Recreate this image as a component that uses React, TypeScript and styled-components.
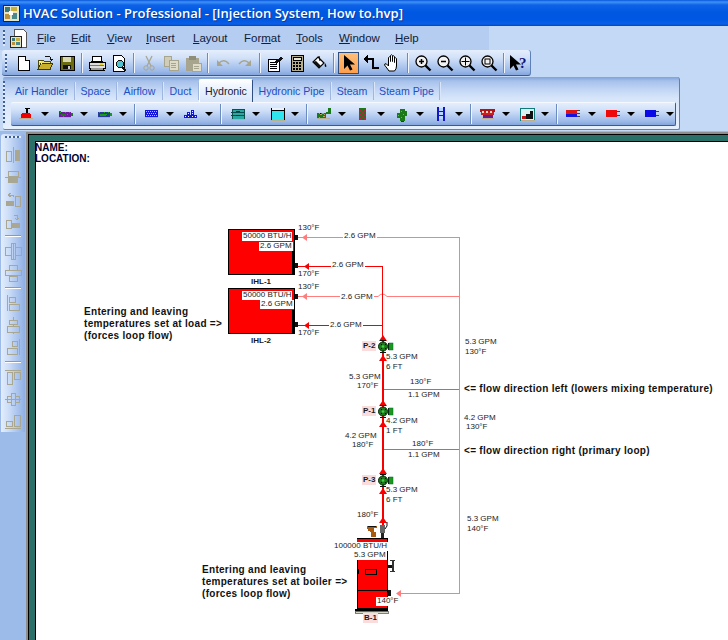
import React from 'react';
import styled, { createGlobalStyle, css } from 'styled-components';

const Global = createGlobalStyle`
  html, body { margin: 0; padding: 0; background: #c4d9f5; overflow: hidden; }
  #root { width: 728px; height: 640px; }
`;

const Window = styled.div`
  width: 728px; height: 640px; display: flex; flex-direction: column; overflow: hidden;
  background: #c4d9f5; font-family: "Liberation Sans", Arial, sans-serif;
`;
const TitleBar = styled.div`
  height: 26px; flex: none; display: flex; align-items: center; gap: 3px; padding-left: 2px; box-sizing: border-box;
  background: linear-gradient(#0a55d8 0, #3d93f8 2px, #0f62e6 5px, #0058e2 12px, #0058e2 20px, #0a5fe8 24px, #0446b8 26px);
`;
const TitleText = styled.span`
  color: #fff; font: 600 13px "Open Sans", sans-serif; text-shadow: 1px 1px 0 #0a3a9a; white-space: nowrap;
`;
const MenuRow = styled.div`height: 24px; flex: none; display: flex;`;
const MenuBand = styled.div`
  width: 489px; display: flex; align-items: center; background: #b5cdf1; box-sizing: border-box; padding-left: 3px;
`;
const Grip = styled.div<{ $h?: number }>`
  width: 2px; height: ${p => p.$h ?? 16}px; flex: none;
  background: repeating-linear-gradient(#3d5f96 0 2px, #dfeafb 2px 4px);
`;
const MenuLogo = styled.svg`margin-left: 4px; flex: none;`;
const MenuItems = styled.div`display: flex; margin-left: 8px; align-items: center;`;
const MenuItem = styled.span<{ $w: number }>`
  width: ${p => p.$w}px; font-size: 11.5px; color: #10203a; white-space: nowrap;
`;
const ToolbarRow = styled.div`height: 27px; flex: none; padding-left: 2px; box-sizing: border-box;`;
const barFill = css`background: linear-gradient(#e4eefd 0, #d3e2f8 30%, #b9cff2 55%, #9ab8e8 85%, #84a5dc 100%);`;
const Toolbar = styled.div`
  width: 529px; height: 26px; display: flex; align-items: center; box-sizing: border-box;
  ${barFill}
  border-bottom: 1px solid #3a5b8f; border-right: 1px solid #5d80b8; border-radius: 3px 3px 3px 3px; padding-left: 3px;
`;
const Btn = styled.div<{ $on?: boolean }>`
  width: 22px; height: 22px; flex: none; display: flex; align-items: center; justify-content: center; box-sizing: border-box;
  ${p => p.$on && css`background: linear-gradient(#fdc07a, #fe9f4c); border: 1px solid #2f4f80; width: 21px; margin-right: 1px;`}
`;
const GripBox = styled.div`width: 7px; flex: none; display: flex; justify-content: flex-start;`;
const Sep = styled.div`
  width: 8px; height: 20px; flex: none; position: relative;
  &::after { content: ""; display: block; margin-left: 3px; width: 1px; height: 20px; background: #6c8cc0; box-shadow: 1px 0 0 #f2f7ff; }
`;
const TabRow = styled.div`height: 54px; flex: none; padding-left: 3px; box-sizing: border-box;`;
const TabPanel = styled.div`
  width: 677px; height: 53px; box-sizing: border-box; display: flex; flex-direction: column; position: relative;
  background: linear-gradient(#7fa2d9 0, #a6c1ea 4px, #c0d5f4 12px, #d8e6fa 22px, #e6f0fd 100%);
  border-right: 1px solid #5d80b8; border-bottom: 1px solid #5d80b8; border-radius: 2px 3px 2px 2px;
`;
const TabGrip = styled.div`position: absolute; left: 0; top: 4px;`;
const Tabs = styled.div`display: flex; height: 24px; padding: 2px 0 0 6px; box-sizing: border-box; align-items: stretch;`;
const Tab = styled.div<{ $on?: boolean; $w: number }>`
  width: ${p => p.$w}px; font-size: 10.6px; white-space: nowrap; display: flex; align-items: center; justify-content: center; box-sizing: border-box; flex: none;
  ${p => p.$on ? css`
    color: #10203a; background: linear-gradient(#fff, #f3f7fe 20%, #d8e6fa); border: 1px solid #fff; border-right: 1px solid #2f4f80; border-bottom: 0; height: 23px; border-radius: 2px 2px 0 0;
  ` : css`
    color: #1c4fc4; margin-top: 3px; height: 18px; border-right: 1px solid #9db7e0; box-shadow: 1px 0 0 #d9e6fa;
  `}
`;
const Strip = styled.div`
  margin: 1px 0 0 8px; width: 665px; height: 24px; flex: none; display: flex; align-items: center; box-sizing: border-box; overflow: hidden;
  border-top: 1px solid #f5f9ff; ${barFill} border-right: 1px solid #3a5b8f; border-bottom: 1px solid #3a5b8f; border-radius: 2px; padding-left: 5px;
`;
const Drop = styled.div`width: 39px; height: 22px; flex: none; display: flex; align-items: center;`;
const DropIcon = styled.div`width: 22px; display: flex; justify-content: center; flex: none;`;
const Caret = styled.div`
  width: 0; height: 0; border: 4px solid transparent; border-top: 4px solid #000; border-bottom: 0; flex: none; margin-left: 3px;
`;
const StripSep = styled.div`
  width: 8px; height: 20px; flex: none;
  &::after { content: ""; display: block; margin-left: 1px; width: 1px; height: 20px; background: #6c8cc0; box-shadow: 1px 0 0 #f2f7ff; }
`;
const Workspace = styled.div`flex: 1; min-height: 0; display: flex; background: #9cbbe8;`;
const Dock = styled.div`width: 26px; flex: none; padding: 3px 0 0 1px; box-sizing: border-box; background: #9cbbe8;`;
const VToolbar = styled.div`
  width: 24px; height: 298px; box-sizing: border-box; display: flex; flex-direction: column; align-items: center; padding-left: 0;
  background: linear-gradient(90deg, #e3eefd 0, #c9dbf6 35%, #b2caf0 60%, #8eaee3 100%); border-radius: 3px 3px 0 0;
`;
const VGrip = styled.div`
  height: 8px; width: 16px; flex: none; margin-top: 2px; box-sizing: border-box;
  background: repeating-linear-gradient(90deg, #3d5f96 0 2px, #e6effc 2px 4px) 0 0 / 100% 2px no-repeat;
`;
const VBtn = styled.div`width: 22px; height: 22px; flex: none; display: flex; align-items: center; justify-content: center;`;
const VSep = styled.div`
  height: 8px; width: 100%; flex: none; display: flex; align-items: center; justify-content: center;
  &::after { content: ""; width: 16px; height: 1px; background: #fff; box-shadow: 0 -1px 0 #7c9bd0; }
`;
const Frame = styled.div`
  flex: 1; min-width: 0; margin-top: 1px; border-top: 2px solid #8e8e8e; border-left: 2px solid #8e8e8e; background: #000;
  display: flex; box-sizing: border-box;
`;
const FrameInner = styled.div`
  flex: 1; min-width: 0; margin: 1px 0 0 1px; background: #2b7068; padding: 6px 0 0 6px; box-sizing: border-box; display: flex;
`;
const Canvas = styled.div`
  flex: 1; min-width: 0; background: #fff; border-top: 1px solid #000; border-left: 1px solid #000; position: relative; overflow: hidden;
`;
const Sheet = styled.svg`position: absolute; left: 0; top: 0; display: block;`;
const OX = 36, OY = 141;
type LP = { $x: number; $y: number; $kind?: 'n' | 'b' | 'note' | 'head' | 'tag'; $bg?: boolean };
const Lbl = styled.span.attrs<LP>(p => ({ style: { left: p.$x - OX, top: p.$y - OY - 5 } }))<LP>`
  position: absolute; line-height: 10px; height: 10px; white-space: nowrap; color: #222;
  font-size: 8px;
  ${p => p.$bg && css`background: #fff; padding: 0 1px; margin-left: -1px; margin-top: 1px; height: 9px; line-height: 8px;`}
  ${p => p.$kind === 'b' && css`font-weight: 700; color: #1a1a1a;`}
  ${p => p.$kind === 'tag' && css`font-weight: 700; color: #1a1a1a; background: #fbdcdc; padding: 0 1px; margin-left: -1px;`}
  ${p => p.$kind === 'note' && css`font-size: 10px; font-weight: 700; color: #111; line-height: 12px; height: 12px; margin-top: -1px; letter-spacing: 0.3px;`}
  ${p => p.$kind === 'head' && css`font-size: 10px; font-weight: 700; color: #000030; background: #fff; padding-right: 2px;`}
`;

type S = React.SVGProps<SVGSVGElement>;
const Ico: React.FC<S & { w?: number; h?: number; crisp?: boolean }> = ({ w = 18, h = 18, crisp = true, children, ...r }) => (
  <svg width={w} height={h} viewBox={`0 0 ${w} ${h}`} shapeRendering={crisp ? 'crispEdges' : 'auto'} {...r}>{children}</svg>
);

function Zoomer({ k }: { k: string }) {
  return (
    <Ico crisp={false}>
      <circle cx="7.500" cy="7.500" r="5.500" fill="#f2f2f2" stroke="#000" strokeWidth="1.300" />
      <path d="M11.500 11.500l5 5" stroke="#000" strokeWidth="2.400" />
      {k !== 'o' && k !== 'x' && <path d="M5 7.500h5" stroke="#000" strokeWidth="1.500" />}
      {k === '+' && <path d="M7.500 5v5" stroke="#000" strokeWidth="1.500" />}
      {k === 'x' && <path d="M7.500 3.500v8M3.500 7.500h8" stroke="#000" />}
      {k === 'o' && <rect x="5" y="5" width="5" height="5" fill="none" stroke="#000" />}
    </Ico>
  );
}

const I = {
  new: <Ico><path d="M4 2h7l4 4v10H4z" fill="#fff" stroke="#000" /><path d="M11 2v4h4" fill="#ddd" stroke="#000" /></Ico>,
  open: <Ico><path d="M2 6h5l1 1h6v8H2z" fill="#efe26a" stroke="#4a4a10" /><path d="M2 15l3-6h12l-3 6z" fill="#c9b02c" stroke="#3a3a08" /><path d="M3 7h2v1H3zM5 9h1v1H5z" fill="#fff" /><path d="M9 3q3-2 5 0l1 2" fill="none" stroke="#111" /><path d="M13 5h4l-2 2z" fill="#111" /></Ico>,
  save: <Ico><rect x="2" y="2" width="14" height="14" fill="#6b6b12" stroke="#000" /><rect x="5" y="3" width="8" height="5" fill="#d9d9b0" /><rect x="5" y="11" width="8" height="4" fill="#111" /><rect x="10" y="12" width="2" height="3" fill="#ccc" /></Ico>,
  print: <Ico><path d="M5 2h8l1 5H4z" fill="#fff" stroke="#000" /><path d="M1 8h16v6H1z" fill="#ddd" stroke="#000" /><path d="M3 14l-1 2h14l-1-2" fill="#999" stroke="#000" /><path d="M12 9h3v2h-3z" fill="#e8d23a" /><path d="M2 11h14" stroke="#777" /></Ico>,
  preview: <Ico><path d="M3 1h8l3 3v13H3z" fill="#fff" stroke="#000" /><circle cx="10" cy="10" r="3.500" fill="#4fc3cf" stroke="#111" /><path d="M12 13l4 4" stroke="#111" strokeWidth="2" /></Ico>,
  cut: <Ico crisp={false}><path d="M6 2l5 10M12 2L7 12" stroke="#a8a58f" strokeWidth="1.300" fill="none" /><circle cx="6" cy="14" r="2.200" fill="none" stroke="#a8a58f" /><circle cx="12" cy="14" r="2.200" fill="none" stroke="#a8a58f" /></Ico>,
  copy: <Ico><path d="M2 2h7v10H2z" fill="#cfccb8" stroke="#a8a58f" /><path d="M7 6h9v10H7z" fill="#dedbc9" stroke="#a8a58f" /><path d="M9 9h5M9 11h5M9 13h5" stroke="#a8a58f" /></Ico>,
  paste: <Ico><path d="M2 4h13v13H2z" fill="#a8a58f" /><path d="M5 2h7v4H5z" fill="#8f8c78" /><path d="M8 9h9v8H8z" fill="#dedbc9" stroke="#a8a58f" /><path d="M10 12h5M10 14h5" stroke="#a8a58f" /></Ico>,
  undo: <Ico crisp={false}><path d="M5 9q5-5 10 1" fill="none" stroke="#a8a58f" strokeWidth="1.600" /><path d="M3 6v6h6z" fill="#a8a58f" /></Ico>,
  redo: <Ico crisp={false}><path d="M13 9q-5-5-10 1" fill="none" stroke="#a8a58f" strokeWidth="1.600" /><path d="M15 6v6H9z" fill="#a8a58f" /></Ico>,
  props: <Ico><path d="M2 5h11v12H2z" fill="#fff" stroke="#000" /><path d="M4 8h7M4 10h7M4 12h7M4 14h7" stroke="#000" /><path d="M8 8l7-5 2 2-7 5z" fill="#111" /></Ico>,
  calc: <Ico><rect x="3" y="1" width="12" height="16" fill="#b5ad8c" stroke="#000" /><rect x="5" y="3" width="8" height="3" fill="#e4e4d0" stroke="#000" /><path d="M5 8h2v2H5zM8 8h2v2H8zM11 8h2v2h-2zM5 11h2v2H5zM8 11h2v2H8zM11 11h2v2h-2zM5 14h2v2H5zM8 14h2v2H8zM11 14h2v2h-2z" fill="#000" /></Ico>,
  fill: <Ico crisp={false}><path d="M8 3l6 6-5 5-6-6z" fill="#fff" stroke="#000" strokeWidth="1.200" /><path d="M3 8l6 6 2-2-5-5z" fill="#111" /><path d="M9 2l1 5" stroke="#000" /><path d="M15 9q2 3 1 4q-2 0-1-4" fill="#000" /></Ico>,
  arrow: <Ico crisp={false} w={14}><path d="M2 1l0 14 3.500-3.500 2.500 5 2.500-1-2.500-5h5z" fill="#000" /></Ico>,
  pipe: <Ico><path d="M6 5h5v9h6" fill="none" stroke="#000" strokeWidth="2.400" /><path d="M6 1v8L1 5z" fill="#000" /></Ico>,
  hand: <Ico crisp={false}><path d="M5 17q-2-3-4.500-6q0-2 2-1l2 2V3.500q1-1.500 2 0v4V1.500q1-1.500 2 0v6V2.500q1-1.500 2 0v6V4.500q1-1.500 2 0v7.500q0 3-2 5z" fill="#fff" stroke="#000" strokeWidth="1" /></Ico>,
  zoomIn: <Zoomer k="+" />,
  zoomOut: <Zoomer k="-" />,
  zoomFit: <Zoomer k="x" />,
  zoomPage: <Zoomer k="o" />,
  help: <Ico crisp={false} w={20}><path d="M1 1l0 14 3.500-3.500 2.500 5 2.500-1-2.500-5h5z" fill="#000" /><text x="10" y="14" fontFamily="Liberation Serif" fontWeight="700" fontSize="15" fill="#12127a">?</text></Ico>,
};

const DI = {
  pump: <Ico><path d="M3 10h10v3H3z" fill="#e00000" /><path d="M3 9q5-3 10 0v4H3z" fill="#f00000" /><path d="M8 4h2v4H8zM7 3h5v1H7z" fill="#000" /><path d="M1 13h14v1H1z" fill="#b8b090" /></Ico>,
  coilA: <Ico><path d="M2 7h12v5H2z" fill="#6a1a9a" /><path d="M3 7h1v1H3zM5 9h1v1H5zM8 7h1v1H8zM10 9h1v1h-1zM12 7h1v1h-1zM6 11h1v1H6z" fill="#1fa51f" /><path d="M2 6h2v1H2zM14 8h2v3h-2zM4 9h5v2H4z" fill="#1a7a1a" /><path d="M2 12h12v1H2z" fill="#b8b090" /></Ico>,
  coilB: <Ico><path d="M2 7h12v5H2z" fill="#2a3a9a" /><path d="M3 7h1v1H3zM5 9h1v1H5zM8 7h1v1H8zM10 9h1v1h-1zM12 7h1v1h-1z" fill="#1fa51f" /><path d="M14 8h2v3h-2zM4 9h6v2H4z" fill="#1a9a1a" /><path d="M2 12h12v1H2z" fill="#b8b090" /></Ico>,
  blueGrid: <Ico><path d="M2 5h13v7H2z" fill="#1414e0" /><path d="M3 6h1v1H3zM5 6h1v1H5zM7 6h1v1H7zM9 6h1v1H9zM11 6h1v1h-1zM13 6h1v1h-1zM4 8h1v1H4zM6 8h1v1H6zM8 8h1v1H8zM10 8h1v1h-1zM12 8h1v1h-1zM3 10h1v1H3zM5 10h1v1H5zM7 10h1v1H7zM9 10h1v1H9zM11 10h1v1h-1zM13 10h1v1h-1z" fill="#7fdcff" /><path d="M2 12h13v1H2z" fill="#b8b090" /></Ico>,
  blueRad: <Ico><path d="M2 10h13v3H2zM5 7h3v3H5zM9 5h3v5H9z" fill="#1414d8" /><path d="M3 11h1v1H3zM6 8h1v1H6zM6 11h1v1H6zM10 6h1v1h-1zM10 8h1v1h-1zM10 11h1v1h-1zM13 11h1v1h-1z" fill="#fff" /></Ico>,
  tank: <Ico><path d="M3 4h12v10H3z" fill="#28a8a0" stroke="#10504a" /><path d="M2 7h14M2 10h14" stroke="#0a4a50" /><path d="M7 6h4v1H7zM7 10h4v1H7z" fill="#10208a" /><path d="M2 14h14v1H2z" fill="#b8b090" /></Ico>,
  basin: <Ico><path d="M3 3v12h13V3" fill="#2fe6ee" stroke="#000" /><path d="M3.500 3h12v2h-12z" fill="#e8f2fd" /><path d="M3 5h13" stroke="#000" /><path d="M3 15h14v1H3z" fill="#b8b090" /></Ico>,
  chiller: <Ico><path d="M2 8h9v5H2z" fill="#1a7a1a" /><path d="M4 8l2 2 2-2 2 2M4 12h1M8 11h2" stroke="#b8a060" /><path d="M11 7h5v2h-5zM13 3h3v4h-3z" fill="#1a7a1a" /><path d="M2 13h13v1H2z" fill="#b8b090" /></Ico>,
  vert: <Ico><path d="M5 3h7v12H5z" fill="#1a7a1a" /><path d="M6 5h1v1H6zM8 7h1v1H8zM10 5h1v1h-1zM6 9h1v1H6zM10 9h1v1h-1zM8 11h1v1H8zM6 13h1v1H6zM10 13h1v1h-1z" fill="#c02040" /></Ico>,
  cactus: <Ico><path d="M7 4h5v12H7zM4 8h3v5H4zM12 6h2v5h-2z" fill="#1a7a1a" /><path d="M8 6h1v1H8zM10 9h1v1h-1zM8 12h1v1H8zM5 10h1v1H5z" fill="#a8a020" /><path d="M8 16h3v1H8z" fill="#333" /></Ico>,
  ladder: <Ico><path d="M5 2h2v14H5zM11 2h2v14h-2z" fill="#1414c8" /><path d="M7 3h4v3H7zM7 7h4v3H7zM7 11h4v3H7z" fill="#b8d8ff" /><path d="M7 6h4M7 10h4" stroke="#1414c8" /></Ico>,
  hood: <Ico><path d="M1 4h15v3H1z" fill="#b01414" /><path d="M2 7h13v3H2z" fill="#c82020" /><path d="M4 10h10v3H4z" fill="#6a1a8a" /><path d="M3 6h2v2H3zM7 6h2v2H7zM11 6h2v2h-2z" fill="#ffd8c0" /><path d="M3 13h12v1H3z" fill="#b8b090" /></Ico>,
  panel: <Ico><rect x="2" y="3" width="14" height="12" fill="#d8f0ee" stroke="#107a78" /><path d="M8 9h4v5H8zM12 6h3v8h-3z" fill="#111" /><path d="M4 11h4v3H4z" fill="#c01414" /><path d="M3 15h14v1H3z" fill="#b8b090" /></Ico>,
  splitBR: <Ico><path d="M1 5h11v4H1z" fill="#e01414" /><path d="M1 9h11v3H1z" fill="#1414e0" /><path d="M12 5h3M12 8h3M12 11h3" stroke="#444" /></Ico>,
  red: <Ico><path d="M2 5h11v7H2z" fill="#ee0a0a" /><path d="M13 6h3M13 10h3" stroke="#444" /></Ico>,
  blue: <Ico><path d="M2 5h11v7H2z" fill="#0a0ae6" /><path d="M13 6h3M13 10h3" stroke="#444" /></Ico>,
};

const G = '#a9a692';
const gray = (d: string, fill?: string) => (
  <Ico><path d={d} fill="none" stroke={G} />{fill && <path d={fill} fill={G} />}</Ico>
);
const VI = [
  gray('M2 5h5v10H2zM9 1v16', 'M11 4h5v11h-5z'),
  gray('M4 3h10v5H4zM1 9h16', 'M4 10h10v5H4z'),
  gray('M11 6h5v10h-5zM7 3l-3 2 3 2M4 5h5v2', 'M2 11h8v5H2z'),
  gray('M2 8h5v8H2zM10 3h3v4M11 6l2 2 2-2', 'M8 11h8v5H8z'),
  gray('M1 5h6v8H1zM11 5h6v8h-6zM9 1v16M7 1h4v16H7z'),
  gray('M5 1h8v5H5zM1 6h16v5H1zM5 12h8v5H5z'),
  gray('M3 1v16M5 3h6v5H5zM5 10h10v6H5z'),
  gray('M9 1v3M5 4h8v4H5zM9 8v2M3 10h12v6H3zM9 16v2'),
  gray('M15 1v16M8 3h5v5H8zM3 10h10v6H3z'),
  gray('M1 2h16M3 4h5v12H3zM10 4h6v7h-6z'),
  gray('M1 9h16M3 6h4v6H3zM7 3h4v12H7zM11 6h4v6h-4z'),
  gray('M1 16h16M2 9h6v5H2zM10 3h6v11h-6z'),
];

const Main: React.FC = () => (
  <Toolbar>
    <GripBox><Grip $h={18} /></GripBox>
    <Btn>{I.new}</Btn><Btn>{I.open}</Btn><Btn>{I.save}</Btn><Sep />
    <Btn>{I.print}</Btn><Btn>{I.preview}</Btn><Sep />
    <Btn>{I.cut}</Btn><Btn>{I.copy}</Btn><Btn>{I.paste}</Btn><Sep />
    <Btn>{I.undo}</Btn><Btn>{I.redo}</Btn><Sep />
    <Btn>{I.props}</Btn><Btn>{I.calc}</Btn><Btn>{I.fill}</Btn><Sep />
    <Btn $on>{I.arrow}</Btn><Btn>{I.pipe}</Btn><Btn>{I.hand}</Btn><Sep />
    <Btn>{I.zoomIn}</Btn><Btn>{I.zoomOut}</Btn><Btn>{I.zoomFit}</Btn><Btn>{I.zoomPage}</Btn><Sep />
    <Btn>{I.help}</Btn>
  </Toolbar>
);

const groups = [
  [DI.pump, DI.coilA, DI.coilB], [DI.blueGrid, DI.blueRad], [DI.tank, DI.basin],
  [DI.chiller, DI.vert, DI.cactus, DI.ladder], [DI.hood, DI.panel], [DI.splitBR, DI.red, DI.blue],
];

const PINK = '#ff7d7d', RED = '#f80000', GREEN = '#39b539';

const Up = ({ y, c = RED }: { y: number; c?: string }) => <path d={`M379 ${y + 3}L383 ${y - 3}L387 ${y + 3}z`} fill={c} />;
const Left = ({ x, y, c }: { x: number; y: number; c: string }) => <path d={`M${x} ${y + 0.5}L${x + 5} ${y - 3}V${y + 4}z`} fill={c} />;
const Pump = ({ y }: { y: number }) => (
  <g>
    <rect x="380" y={y - 6} width="6" height="1" fill="#111" />
    <rect x="380" y={y + 6} width="6" height="1" fill="#111" />
    <rect x="388" y={y - 3} width="1" height="7" fill="#111" />
    <rect x="389" y={y - 3} width="4" height="7" fill="#1a9a1a" stroke="#063" strokeWidth="0.500" />
    <circle cx="383" cy={y + 0.5} r="4.500" fill="#1a7a1a" stroke="#082a08" />
    <path d={`M381 ${y - 2}h1v1h-1zM385 ${y - 2}h1v1h-1zM381 ${y + 2}h1v1h-1zM385 ${y + 2}h1v1h-1z`} fill="#000" />
    <circle cx="383" cy={y + 0.5} r="1.300" fill="#49d049" />
  </g>
);
const Box = ({ y }: { y: number }) => (
  <g>
    <rect x="228.500" y={y + 0.5} width="66" height="45" fill="#ff0000" stroke="#000" />
    <rect x="292" y={y + 22} width="3" height="24" fill="#000" />
    <rect x="295" y={y + 6} width="3" height="5" fill="#111" />
    <rect x="295" y={y + 34} width="3" height="5" fill="#111" />
  </g>
);

const Diagram = () => (
  <Sheet width="692" height="499" viewBox={`${OX} ${OY} 692 499`} shapeRendering="crispEdges">
    <Box y={228} /><Box y={287} />
    <g fill="none" stroke={PINK}>
      <path d="M298 236.500H459.500V592.500H398" />
      <path d="M298 295.500H378" />
      <path d="M387 295.500H459" />
    </g>
    <path d="M378 295.500q4.500 -5 9 0" fill="none" stroke={PINK} shapeRendering="auto" />
    <g fill="none" stroke={RED}>
      <path d="M298 265.500H382.500V338" />
      <path d="M298 324.500H382" />
    </g>
    <rect x="382" y="338" width="2" height="200" fill={RED} />
    <rect x="382" y="265" width="1" height="80" fill={RED} />
    <g stroke={GREEN} fill="none">
      <path d="M384 388.500H459M384 448.500H459" />
    </g>
    <g shapeRendering="auto">
      <Left x={302} y={236} c={PINK} /><Left x={304} y={265} c={RED} />
      <Left x={302} y={295} c={PINK} /><Left x={304} y={324} c={RED} />
      <Left x={396} y={592} c={PINK} />
      <Up y={337} /><Up y={357} /><Up y={402} /><Up y={423} />
      <Up y={470} /><Up y={490} /><Up y={519} />
      <Pump y={345} /><Pump y={410} /><Pump y={479} />
    </g>
    {/* boiler */}
    <rect x="357" y="537" width="30" height="70" fill="#ff0000" stroke="#000" />
    <rect x="357" y="538" width="29" height="20" fill="#ff0000" />
    <rect x="387" y="537" width="1" height="70" fill="#000" />
    <path d="M358 589.500H387" stroke="#000" />
    <rect x="365" y="568" width="11" height="5" fill="none" stroke="#000" />
    <rect x="358" y="568" width="1" height="5" fill="#000" />
    <rect x="355" y="608" width="33" height="2" fill="#000" />
    <rect x="355" y="610" width="33" height="2" fill="#d8d8c8" stroke="#000" strokeWidth="0.500" />
    <rect x="387" y="564" width="5" height="3" fill="#111" />
    <rect x="392" y="559" width="2" height="12" fill="#333" />
    <rect x="390" y="559" width="5" height="1" fill="#333" />
    <rect x="390" y="570" width="5" height="1" fill="#333" />
    <rect x="388" y="589" width="3" height="6" fill="#111" />
    {/* valves */}
    <path d="M367 525h10v2h-3v4h2v5h-5v-5l-3 -1z" fill="#a85a10" />
    <path d="M368 525h8v1h-8z" fill="#111" />
    <rect x="380" y="524" width="5" height="8" fill="#666" />
    <rect x="381" y="532" width="3" height="5" fill="#222" />
    <path d="M387 521v4l-2 3" stroke="#111" fill="none" shapeRendering="auto" />
  </Sheet>
);

const labels: [number, number, string, LP['$kind']?, boolean?][] = [
  [35, 147, 'NAME:', 'head'], [35, 158, 'LOCATION:', 'head'],
  [243, 235, '50000 BTU/H', 'n', true], [260, 245, '2.6 GPM', 'n', true],
  [243, 294, '50000 BTU/H', 'n', true], [261, 303, '2.6 GPM', 'n', true],
  [298, 227, '130°F'], [298, 273, '170°F'], [298, 286, '130°F'], [298, 332, '170°F'],
  [344, 235, '2.6 GPM', 'n', true], [332, 264, '2.6 GPM', 'n', true],
  [341, 296, '2.6 GPM', 'n', true], [330, 324, '2.6 GPM', 'n', true],
  [251, 281, 'IHL-1', 'b'], [251, 340, 'IHL-2', 'b'],
  [363, 345, 'P-2', 'tag'], [363, 410, 'P-1', 'tag'], [363, 479, 'P-3', 'tag'], [364, 617, 'B-1', 'tag'],
  [386, 356, '5.3 GPM'], [386, 366, '6 FT'], [386, 420, '4.2 GPM'], [386, 430, '1 FT'],
  [386, 489, '5.3 GPM'], [386, 499, '6 FT'],
  [349, 376, '5.3 GPM'], [357, 385, '170°F'], [345, 435, '4.2 GPM'], [352, 444, '180°F'],
  [410, 381, '130°F'], [408, 394, '1.1 GPM'], [412, 443, '180°F'], [408, 454, '1.1 GPM'],
  [465, 341, '5.3 GPM'], [465, 351, '130°F'], [464, 417, '4.2 GPM'], [466, 426, '130°F'],
  [467, 518, '5.3 GPM'], [467, 528, '140°F'],
  [357, 514, '180°F'], [334, 545, '100000 BTU/H', 'n', true], [354, 554, '5.3 GPM', 'n', true], [377, 600, '140°F', 'n', true],
  [464, 388, '<= flow direction left (lowers mixing temperature)', 'note'],
  [464, 450, '<= flow direction right (primary loop)', 'note'],
  [84, 311, 'Entering and leaving', 'note'], [84, 323, 'temperatures set at load =>', 'note'], [84, 335, '(forces loop flow)', 'note'],
  [202, 569, 'Entering and leaving', 'note'], [202, 581, 'temperatures set at boiler =>', 'note'], [202, 593, '(forces loop flow)', 'note'],
];

const menu: [React.ReactNode, number][] = [
  [<><u>F</u>ile</>, 34], [<><u>E</u>dit</>, 36], [<><u>V</u>iew</>, 39], [<><u>I</u>nsert</>, 47], [<><u>L</u>ayout</>, 51],
  [<>For<u>m</u>at</>, 52], [<><u>T</u>ools</>, 43], [<><u>W</u>indow</>, 56], [<><u>H</u>elp</>, 30],
];
const tabs: [string, number][] = [['Air Handler', 66], ['Space', 42], ['Airflow', 46], ['Duct', 36], ['Hydronic', 54], ['Hydronic Pipe', 78], ['Steam', 43], ['Steam Pipe', 66]];

export default function App() {
  return (
    <Window>
      <Global />
      <TitleBar>
        <svg width="18" height="18" viewBox="0 0 18 18" shapeRendering="crispEdges">
          <rect x="1" y="1" width="16" height="16" fill="#e4e4c8" stroke="#222" />
          <path d="M3 3h5v5H3z" fill="#3c7a7a" /><path d="M9 3h6v4H9z" fill="#c8b040" /><path d="M3 10h5v5H3z" fill="#b89040" /><path d="M10 9h5v6h-5z" fill="#4a8a8a" /><path d="M7 7h4v4H7z" fill="#fff" />
        </svg>
        <TitleText>HVAC Solution - Professional - [Injection System, How to.hvp]</TitleText>
      </TitleBar>
      <MenuRow>
        <MenuBand>
          <Grip />
          <MenuLogo width="20" height="20" viewBox="0 0 20 20" shapeRendering="crispEdges">
            <path d="M5 1h9l3 3v15H5z" fill="#fff" stroke="#555" />
            <rect x="1" y="8" width="11" height="11" fill="#e4e4c8" stroke="#222" />
            <path d="M3 10h3v3H3z" fill="#3c7a7a" /><path d="M7 10h4v3H7z" fill="#c8b040" /><path d="M3 14h3v3H3z" fill="#b89040" /><path d="M7 14h4v3H7z" fill="#4a8a8a" />
          </MenuLogo>
          <MenuItems>{menu.map(([t, w], i) => <MenuItem key={i} $w={w}>{t}</MenuItem>)}</MenuItems>
        </MenuBand>
      </MenuRow>
      <ToolbarRow><Main /></ToolbarRow>
      <TabRow>
        <TabPanel>
          <TabGrip><Grip $h={44} /></TabGrip>
          <Tabs>{tabs.map(([t, w]) => <Tab key={t} $w={w} $on={t === 'Hydronic'}>{t}</Tab>)}</Tabs>
          <Strip>
            {groups.map((g, i) => (
              <React.Fragment key={i}>
                {i > 0 && <StripSep />}
                {g.map((ic, j) => <Drop key={j}><DropIcon>{ic}</DropIcon><Caret /></Drop>)}
              </React.Fragment>
            ))}
          </Strip>
        </TabPanel>
      </TabRow>
      <Workspace>
        <Dock>
          <VToolbar>
            <VGrip />
            {VI.map((ic, i) => (
              <React.Fragment key={i}>
                {(i === 4 || i === 6 || i === 9) && <VSep />}
                <VBtn>{ic}</VBtn>
              </React.Fragment>
            ))}
          </VToolbar>
        </Dock>
        <Frame><FrameInner><Canvas>
          <Diagram />
          {labels.map(([x, y, t, k, bg], i) => <Lbl key={i} $x={x} $y={y} $kind={k} $bg={bg}>{t}</Lbl>)}
        </Canvas></FrameInner></Frame>
      </Workspace>
    </Window>
  );
}
